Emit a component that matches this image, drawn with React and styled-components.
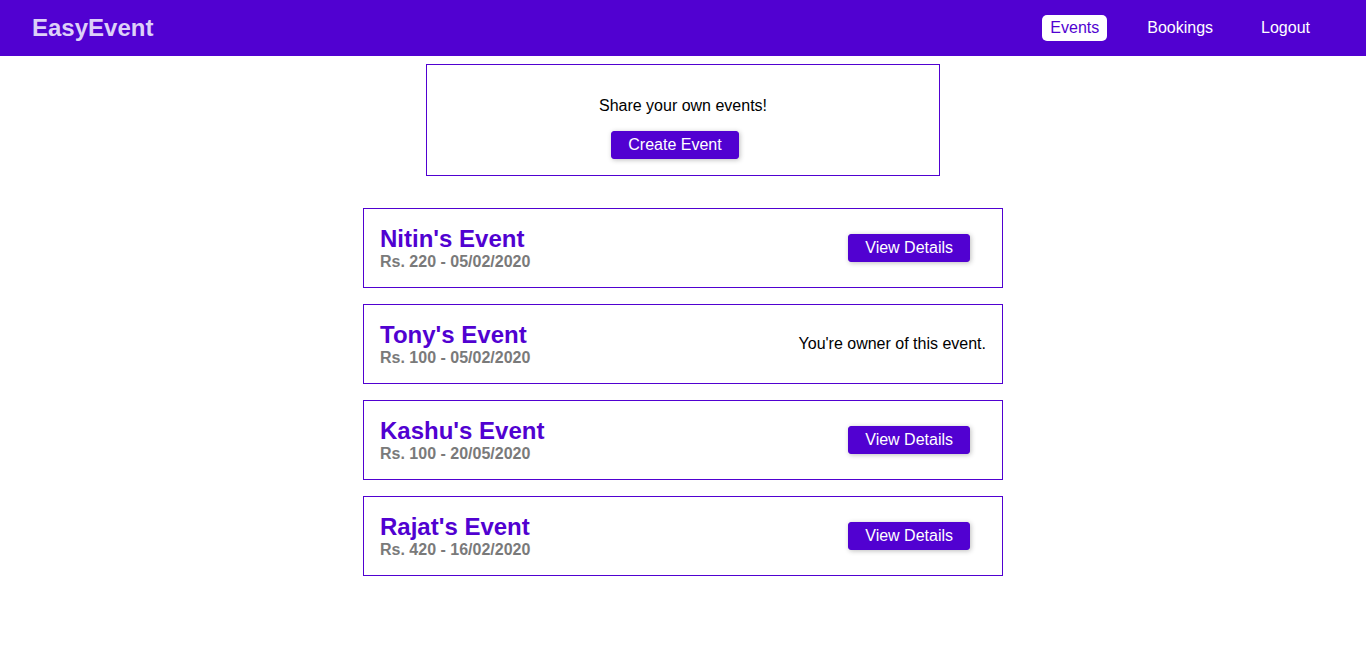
import React from 'react'
import styled, { createGlobalStyle } from 'styled-components';

const GlobalStyle = createGlobalStyle`
    html, body {
        margin: 0;
        padding: 0;
        background: #fff;
        font-family: "Liberation Sans", Arial, sans-serif;
        font-size: 16px;
    }
`

const Nav = styled.header`
    height: 3.5rem;
    background: #5101d1;
    padding: 0 2rem;
    display: flex;
    align-items: center;
    box-sizing: border-box;
`

const Logo = styled.h1`
    margin: 0;
    font-size: 1.5rem;
    color: #ddd0f8;
`

const NavItems = styled.ul`
    margin: 0 0 0 auto;
    padding: 0;
    list-style: none;
    display: flex;
    align-items: center;
`

const NavItem = styled.li`
    margin: 0 1rem;
`

const NavLink = styled.a`
    display: inline-block;
    text-decoration: none;
    color: ${p => (p.$active ? '#5101d1' : '#fff')};
    background: ${p => (p.$active ? '#fff' : 'transparent')};
    border-radius: 5px;
    padding: 0.25rem 0.5rem;
    line-height: 18px;
`

const Main = styled.main`
    padding: 0.5rem 2.5rem 4rem;
`

const Control = styled.div`
    width: 30rem;
    margin: 0 auto;
    padding: 1rem;
    border: 1px solid #5101d1;
    text-align: center;

    p {
        margin: 1rem 0;
        color: #000;
    }
`

const Button = styled.button`
    font: inherit;
    line-height: 18px;
    background: #5101d1;
    color: #fff;
    border: 1px solid #5101d1;
    border-radius: 3px;
    padding: 0.25rem 1rem;
    margin: 0 1rem 0 0;
    box-shadow: 1px 1px 5px rgba(0, 0, 0, 0.26);
    cursor: pointer;
`

const List = styled.ul`
    width: 40rem;
    margin: 2rem auto;
    padding: 0;
    list-style: none;
`

const Item = styled.li`
    margin: 1rem 0;
    padding: 1rem;
    border: 1px solid #5101d1;
    display: flex;
    justify-content: space-between;
    align-items: center;
`

const Title = styled.h1`
    margin: 0;
    font-size: 1.5rem;
    line-height: 28px;
    color: #5101d1;
`

const Sub = styled.h2`
    margin: 0;
    font-size: 1rem;
    line-height: 18px;
    color: #7a7a7a;
`

const Owner = styled.p`
    margin: 0;
    color: #000;
`

const events = [
    { title: "Nitin's Event", price: 220, date: '05/02/2020' },
    { title: "Tony's Event", price: 100, date: '05/02/2020', own: true },
    { title: "Kashu's Event", price: 100, date: '20/05/2020' },
    { title: "Rajat's Event", price: 420, date: '16/02/2020' },
]

export default function App() {
    return (
        <>
            <GlobalStyle />
            <Nav>
                <Logo>EasyEvent</Logo>
                <NavItems>
                    <NavItem><NavLink $active href="#">Events</NavLink></NavItem>
                    <NavItem><NavLink href="#">Bookings</NavLink></NavItem>
                    <NavItem><NavLink href="#">Logout</NavLink></NavItem>
                </NavItems>
            </Nav>
            <Main>
                <Control>
                    <p>Share your own events!</p>
                    <Button>Create Event</Button>
                </Control>
                <List>
                    {events.map(ev => (
                        <Item key={ev.title}>
                            <div>
                                <Title>{ev.title}</Title>
                                <Sub>Rs. {ev.price} - {ev.date}</Sub>
                            </div>
                            <div>
                                {ev.own
                                    ? <Owner>You're owner of this event.</Owner>
                                    : <Button>View Details</Button>}
                            </div>
                        </Item>
                    ))}
                </List>
            </Main>
        </>
    )
}
